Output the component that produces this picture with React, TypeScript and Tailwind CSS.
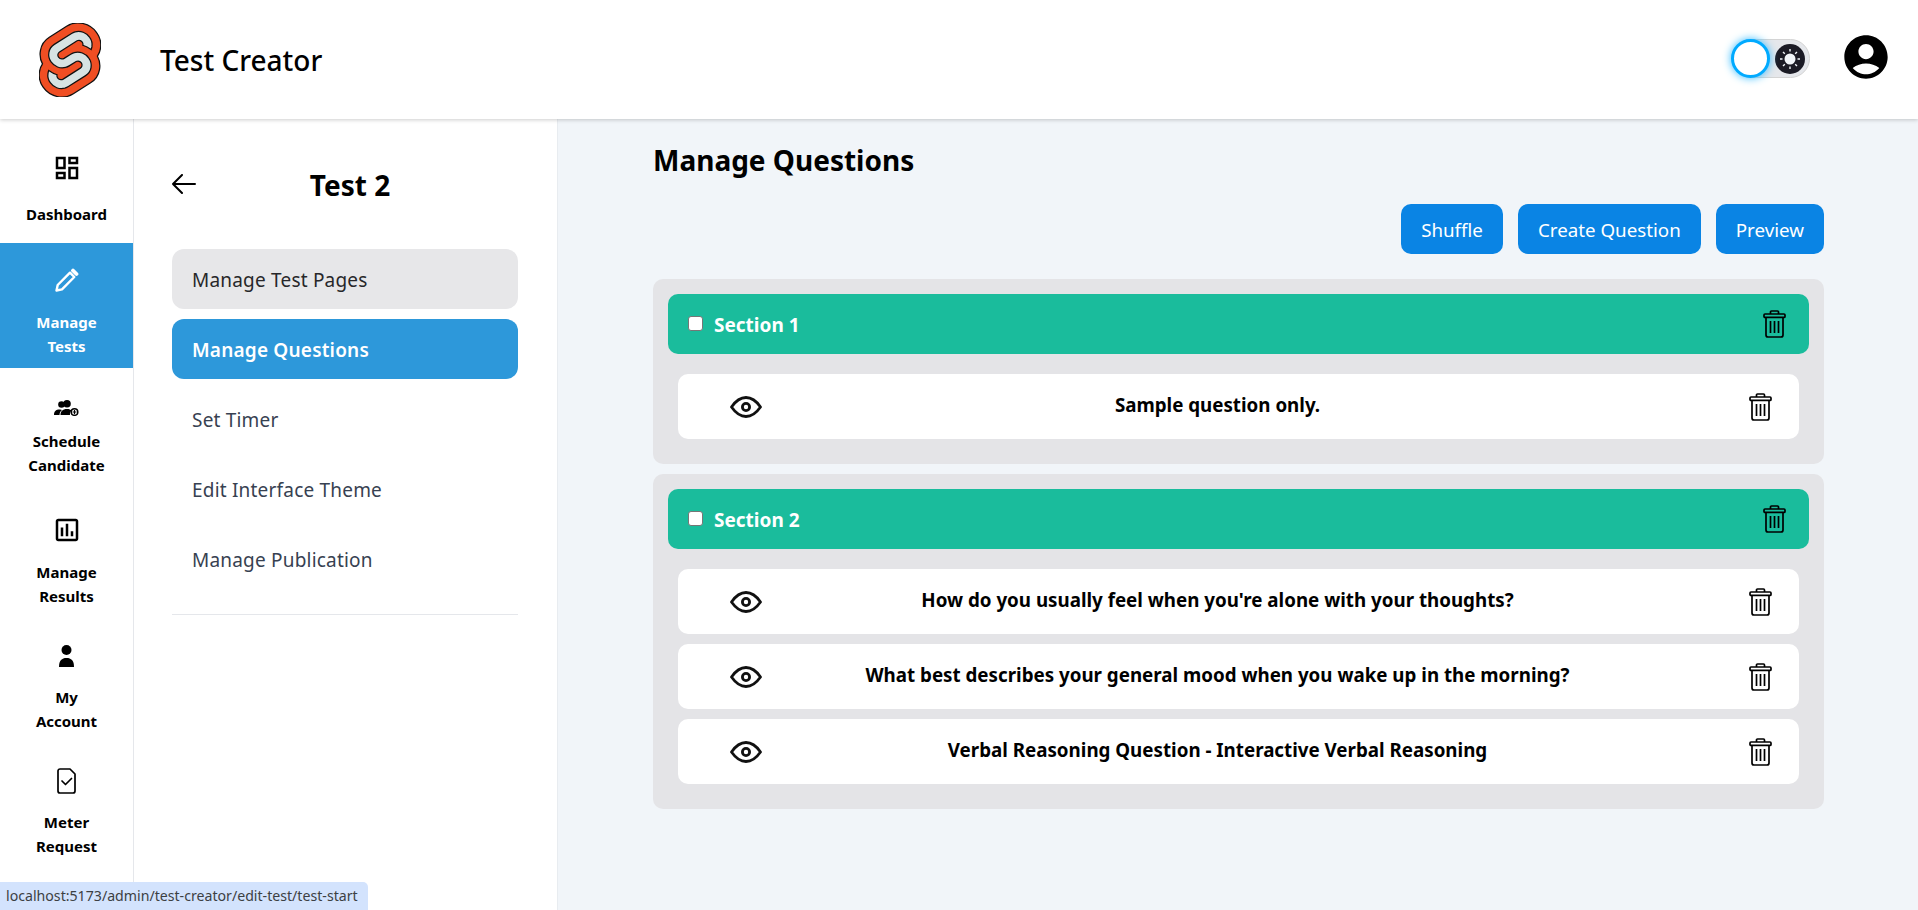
import { MdOutlineDashboard, MdOutlineAssessment, MdAccountCircle } from 'react-icons/md';
import type { ReactNode } from 'react';

const railItems: { key: string; label: string[]; icon: ReactNode; box: string; active?: boolean }[] = [
  { key: 'dashboard', label: ['Dashboard'], icon: <MdOutlineDashboard size={30} />, box: 'h-[124px] pt-[33px] gap-[18px]' },
  { key: 'tests', label: ['Manage', 'Tests'], icon: <PencilIcon />, box: 'h-[125px] pt-[21px] gap-[14px]', active: true },
  { key: 'schedule', label: ['Schedule', 'Candidate'], icon: <ScheduleIcon />, box: 'h-[125px] pt-[24px] gap-[5px]' },
  { key: 'results', label: ['Manage', 'Results'], icon: <MdOutlineAssessment size={30} />, box: 'h-[125px] pt-[21px] gap-[14px]' },
  { key: 'account', label: ['My', 'Account'], icon: <PersonIcon />, box: 'h-[125px] pt-[22px] gap-[13px]' },
  { key: 'meter', label: ['Meter', 'Request'], icon: <MeterIcon />, box: 'h-[125px] pt-[22px] gap-[13px]' },
];

const menu = ['Manage Test Pages', 'Manage Questions', 'Set Timer', 'Edit Interface Theme', 'Manage Publication'];

const sections = [
  { name: 'Section 1', questions: ['Sample question only.'] },
  {
    name: 'Section 2',
    questions: [
      "How do you usually feel when you're alone with your thoughts?",
      'What best describes your general mood when you wake up in the morning?',
      'Verbal Reasoning Question - Interactive Verbal Reasoning',
    ],
  },
];

function PencilIcon() {
  return (
    <svg width="24" height="24" viewBox="0 0 24 24" fill="none" stroke="currentColor">
      <path d="M1.500 22.500l1.200-5.500L15 4.700l4.300 4.300L7 21.300z" strokeWidth="2.400" strokeLinejoin="round" />
      <path d="M18 2.500l3.500 3.500" strokeWidth="3.800" strokeLinecap="round" />
    </svg>
  );
}

function PersonIcon() {
  return (
    <svg width="15" height="22" viewBox="0 0 15 22" fill="currentColor">
      <circle cx="7.500" cy="5" r="5" />
      <path d="M0 22c0-6.500 2.800-9 7.500-9s7.500 2.500 7.500 9z" />
    </svg>
  );
}

function ScheduleIcon() {
  return (
    <svg width="25" height="16" viewBox="0 0 25 16" fill="currentColor">
      <circle cx="7.500" cy="4.500" r="3.300" />
      <circle cx="13" cy="3.800" r="3.800" />
      <path d="M0 15c0-3.500 1.500-5.500 6-5.500 1 0 1.500.2 2 .5-1.500 1-2.500 2.800-2.500 5z" />
      <path d="M6.500 15c0-3.500 2-6 6.500-6 2.500 0 3.500.6 4.500 1.500-1.200 1-1.800 2.800-1.500 4.500z" />
      <circle cx="20.500" cy="12" r="3.300" fill="none" stroke="currentColor" strokeWidth="1.500" />
      <path d="M20.500 10v4M18.500 12h4" stroke="currentColor" strokeWidth="1.200" />
    </svg>
  );
}

function MeterIcon() {
  return (
    <svg width="19" height="26" viewBox="0 0 19 26" fill="none" stroke="currentColor" strokeWidth="1.700" strokeLinejoin="round">
      <path d="M3 1h10l5 5v17a2 2 0 0 1-2 2H3a2 2 0 0 1-2-2V3a2 2 0 0 1 2-2z" />
      <path d="M5 13l3.500 3.500 6-6" strokeLinecap="round" />
    </svg>
  );
}

function BackArrow() {
  return (
    <svg width="24" height="20" viewBox="0 0 24 20" fill="none" stroke="#000" strokeWidth="2" strokeLinecap="round" strokeLinejoin="round">
      <path d="M1 10h22M10 1l-9 9 9 9" />
    </svg>
  );
}

function SvelteLogo() {
  return (
    <svg width="62" height="74" viewBox="0 0 98.1 118">
      <path
        fill="#f04e23"
        stroke="#111"
        strokeWidth="2"
        d="M91.8,15.6C80.9-0.1,59.2-4.7,43.6,5.2L16.1,22.8C8.6,27.5,3.4,35.2,1.9,43.9c-1.3,7.3-0.2,14.8,3.3,21.3c-2.4,3.6-4,7.6-4.7,11.8c-1.6,8.9,0.5,18.1,5.7,25.4c11,15.7,32.6,20.3,48.2,10.4l27.5-17.5c7.5-4.7,12.7-12.4,14.2-21.1c1.3-7.3,0.2-14.8-3.3-21.3c2.4-3.6,4-7.6,4.7-11.8C99.2,32.1,97.1,22.9,91.8,15.6"
      />
      <path
        fill="#d7e3e3"
        stroke="#111"
        strokeWidth="2"
        d="M40.9,103.9c-8.9,2.3-18.2-1.2-23.4-8.7c-3.2-4.4-4.4-9.9-3.5-15.3c0.2-0.9,0.4-1.7,0.6-2.6l0.5-1.6l1.4,1c3.3,2.4,6.9,4.2,10.8,5.4l1,0.3l-0.1,1c-0.1,1.4,0.3,2.9,1.1,4.1c1.6,2.3,4.4,3.4,7.1,2.7c0.6-0.2,1.2-0.4,1.7-0.7L65.5,72c1.4-0.9,2.3-2.2,2.6-3.8c0.3-1.6-0.1-3.3-1-4.6c-1.6-2.3-4.4-3.3-7.1-2.6c-0.6,0.2-1.2,0.4-1.7,0.7l-10.5,6.7c-1.7,1.1-3.6,1.9-5.6,2.4c-8.9,2.3-18.2-1.2-23.4-8.7c-3.1-4.4-4.4-9.9-3.4-15.3c0.9-5.2,4.1-9.9,8.6-12.7l27.5-17.5c1.7-1.1,3.6-1.9,5.6-2.5c8.9-2.3,18.2,1.2,23.4,8.7c3.2,4.4,4.4,9.9,3.5,15.3c-0.2,0.9-0.4,1.7-0.7,2.6l-0.5,1.6l-1.4-1c-3.3-2.4-6.9-4.2-10.8-5.4l-1-0.3l0.1-1c0.1-1.4-0.3-2.9-1.1-4.1c-1.6-2.3-4.4-3.3-7.1-2.6c-0.6,0.2-1.2,0.4-1.7,0.7L32.4,46.1c-1.4,0.9-2.3,2.2-2.6,3.8s0.1,3.3,1,4.6c1.6,2.3,4.4,3.3,7.1,2.6c0.6-0.2,1.2-0.4,1.7-0.7l10.5-6.7c1.7-1.1,3.6-1.9,5.6-2.5c8.9-2.3,18.2,1.2,23.4,8.7c3.2,4.4,4.4,9.9,3.5,15.3c-0.9,5.2-4.1,9.9-8.6,12.7l-27.5,17.5C44.8,102.5,42.9,103.3,40.9,103.9"
      />
    </svg>
  );
}

function EyeIcon() {
  return (
    <svg width="32" height="22" viewBox="0 0 32 22" fill="none" stroke="#111" strokeWidth="2.800">
      <path d="M1.500 11C6 4.500 10.500 1.500 16 1.500S26 4.500 30.500 11C26 17.500 21.500 20.500 16 20.500S6 17.500 1.500 11z" strokeLinejoin="round" />
      <circle cx="16" cy="11" r="3.600" />
    </svg>
  );
}

function TrashIcon() {
  return (
    <svg width="23" height="28" viewBox="0 0 23 28" fill="none" stroke="#000" strokeWidth="1.700" strokeLinejoin="round">
      <path d="M7.500 4V2a1 1 0 0 1 1-1h6a1 1 0 0 1 1 1v2" />
      <rect x="1" y="4" width="21" height="3.400" rx="1" />
      <path d="M3 7.500V25a2 2 0 0 0 2 2h13a2 2 0 0 0 2-2V7.500" />
      <path d="M7.500 11v12M11.500 11v12M15.500 11v12" />
    </svg>
  );
}

function SunIcon() {
  return (
    <svg width="30" height="30" viewBox="0 0 30 30">
      <circle cx="15" cy="15" r="15" fill="#1b1b25" />
      <circle cx="15" cy="15" r="5.500" fill="#f1f5f9" />
      <path
        d="M15 5v2.500M15 22.500V25M5 15h2.500M22.500 15H25M8 8l1.800 1.800M20.200 20.200L22 22M8 22l1.800-1.800M20.200 9.800L22 8"
        stroke="#f1f5f9"
        strokeWidth="1.400"
      />
    </svg>
  );
}

export default function App() {
  return (
    <div className="relative flex h-[910px] flex-col overflow-hidden bg-[#f1f5f9] font-['Noto_Sans',sans-serif] text-black">
      <header className="relative z-10 flex h-[119px] shrink-0 items-center bg-white pl-[39px] pr-[26px] shadow-[0_1px_4px_rgba(0,0,0,0.2)]">
        <SvelteLogo />
        <h1 className="ml-[59px] text-[28px] font-medium">Test Creator</h1>
        <div className="ml-auto flex items-center gap-[30px]">
          <div className="relative mb-[2px] flex h-[39px] w-[78px] items-center justify-end rounded-full border border-[#d4d4d4] bg-[#e5e7eb] pr-[4px]">
            <SunIcon />
            <div className="absolute left-[-2px] top-[-1px] h-[39px] w-[39px] rounded-full border-[3px] border-[#00aaff] bg-white shadow-[0_0_8px_#33bbff]" />
          </div>
          <MdAccountCircle size={52} className="mb-[6px]" />
        </div>
      </header>

      <div className="flex min-h-0 flex-1">
        <nav className="w-[134px] shrink-0 border-r border-[#e5e7eb] bg-white">
          {railItems.map((item) => (
            <div
              key={item.key}
              className={`flex flex-col items-center text-center text-[15px] font-bold leading-[24px] ${item.box} ${
                item.active ? 'bg-[#2d98da] text-white' : ''
              }`}
            >
              <div className="flex h-[32px] items-center justify-center">{item.icon}</div>
              <div>
                {item.label.map((line) => (
                  <div key={line}>{line}</div>
                ))}
              </div>
            </div>
          ))}
        </nav>

        <aside className="w-[424px] shrink-0 border-r border-[#e8ecf0] bg-white pl-[38px] pr-[39px] pt-[44px]">
          <div className="flex h-[42px] items-center">
            <BackArrow />
            <h2 className="flex-1 pr-[14px] pt-[2px] text-center text-[28px] font-bold">Test 2</h2>
          </div>
          <ul className="mt-[44px] flex flex-col gap-[10px] border-b border-[#e5e7eb] pb-[25px]">
            {menu.map((m, i) => (
              <li
                key={m}
                className={`flex h-[60px] items-center rounded-[12px] px-[20px] pt-[2px] text-[19px] tracking-[0.2px] ${
                  i === 0 ? 'bg-[#e7e7e9] text-[#27272a]' : i === 1 ? 'bg-[#2d98da] font-semibold text-white' : 'text-[#374151]'
                }`}
              >
                {m}
              </li>
            ))}
          </ul>
        </aside>

        <main className="flex-1 pl-[95px] pr-[94px] pt-[21px]">
          <h2 className="text-[28px] font-bold leading-[40px]">Manage Questions</h2>
          <div className="mt-[24px] flex justify-end gap-[15px]">
            {['Shuffle', 'Create Question', 'Preview'].map((b) => (
              <button key={b} className="h-[50px] rounded-[10px] bg-[#0a84e4] px-[20px] pt-[2px] text-[18.75px] text-white">
                {b}
              </button>
            ))}
          </div>
          <div className="mt-[25px] flex flex-col gap-[10px]">
            {sections.map((s) => (
              <section key={s.name} className="rounded-[10px] bg-[#e4e4e7] px-[15px] pb-[25px] pt-[15px]">
                <div className="flex h-[60px] items-center rounded-[10px] bg-[#1abc9c] pl-[20px] pr-[23px]">
                  <input
                    type="checkbox"
                    className="mb-[2px] h-[15px] w-[15px] appearance-none rounded-[3px] border border-[#767676] bg-white"
                  />
                  <span className="ml-[11px] pt-[2px] text-[19px] font-bold text-white">{s.name}</span>
                  <div className="ml-auto">
                    <TrashIcon />
                  </div>
                </div>
                <div className="mt-[20px] flex flex-col gap-[10px] px-[10px]">
                  {s.questions.map((q) => (
                    <div key={q} className="flex h-[65px] items-center rounded-[10px] bg-white pl-[52px] pr-[27px]">
                      <EyeIcon />
                      <div className="flex-1 pb-[2px] pr-[76px] text-center text-[18.75px] font-bold">{q}</div>
                      <TrashIcon />
                    </div>
                  ))}
                </div>
              </section>
            ))}
          </div>
        </main>
      </div>

      <div className="absolute bottom-0 left-0 z-20 flex h-[28px] w-[368px] items-center rounded-tr-[5px] bg-[#d3e3fd] pl-[6px] text-[14.15px] text-[#3c4043]">
        localhost:5173/admin/test-creator/edit-test/test-start
      </div>
    </div>
  );
}
